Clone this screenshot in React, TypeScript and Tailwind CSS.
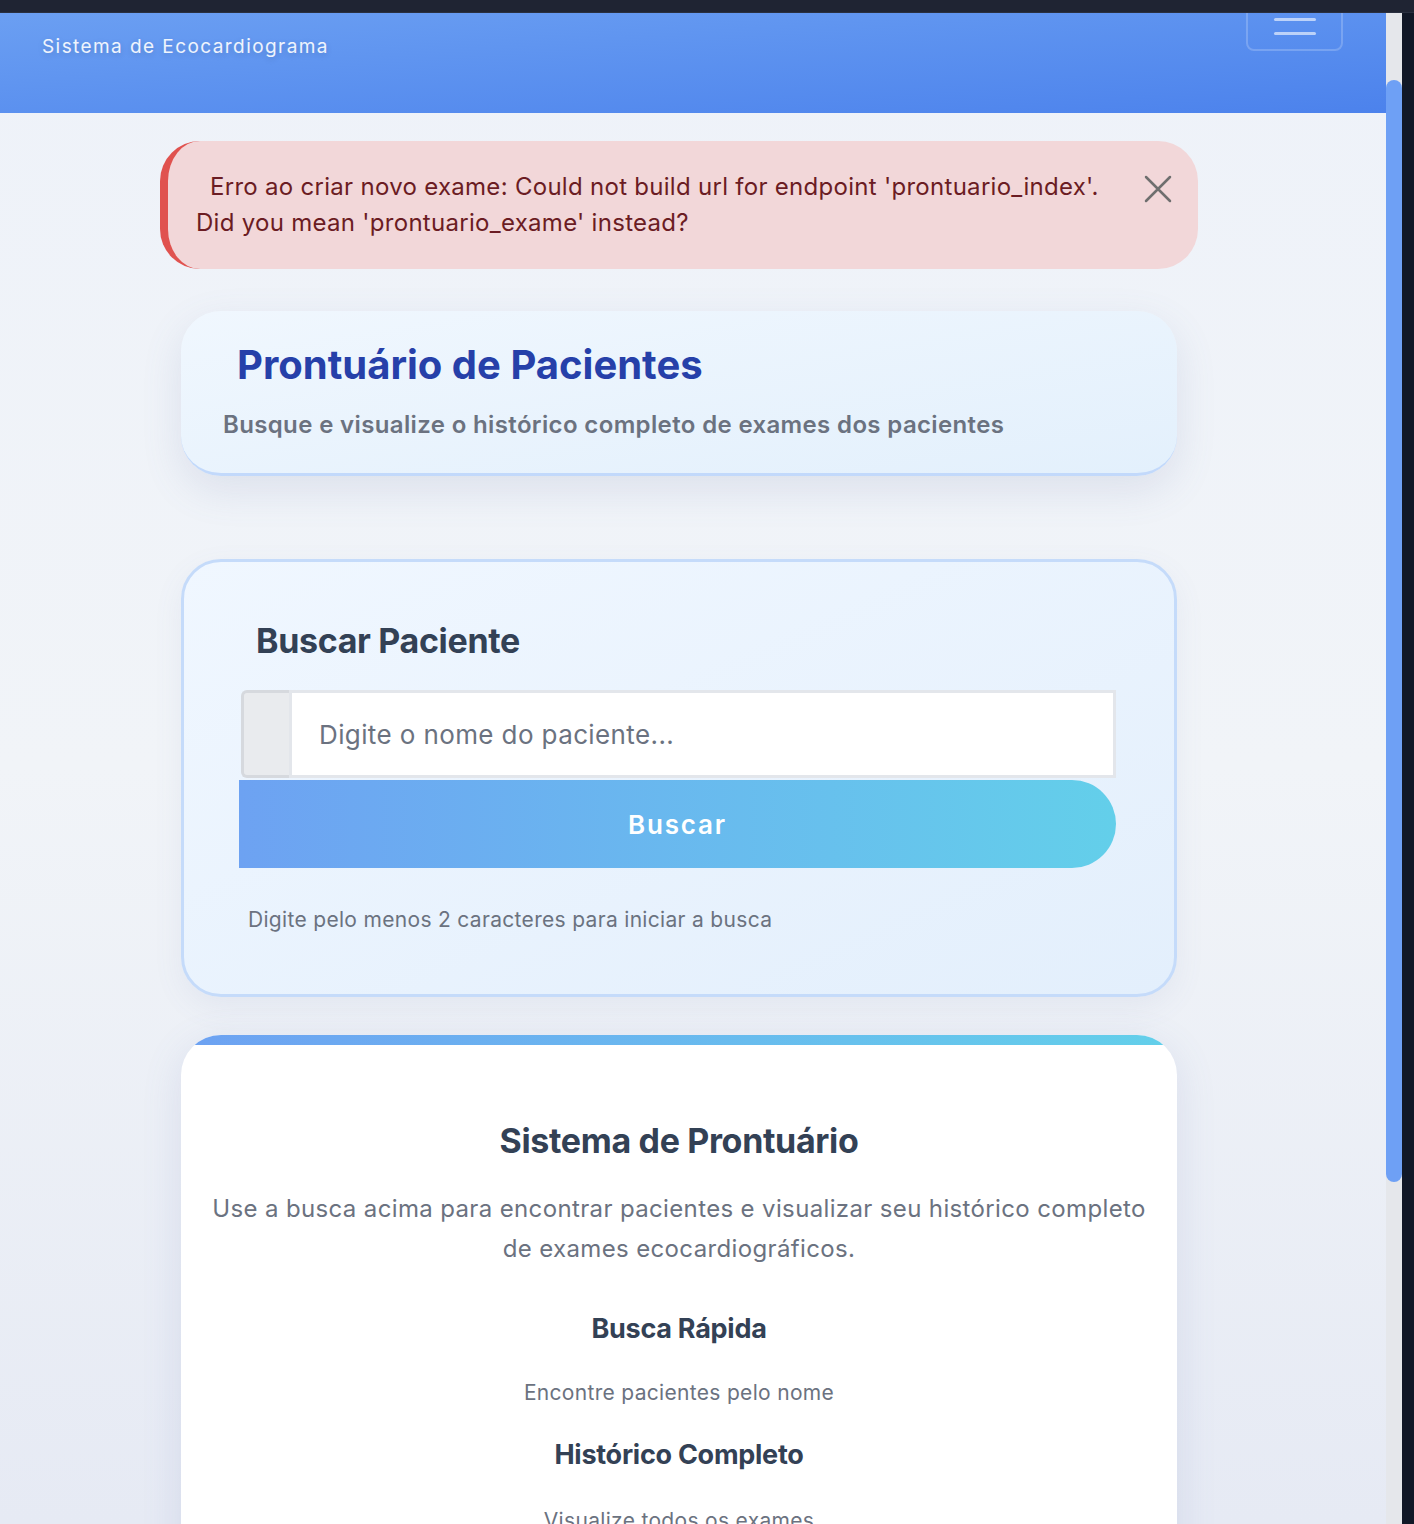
import React from 'react';

const font = { fontFamily: 'Inter, "Noto Sans", sans-serif' };

function Navbar() {
  return (
    <div className="relative h-[100px] bg-gradient-to-br from-[#6b9ff2] to-[#4c82ec] flex items-start justify-between pl-[42px] pr-[43px]">
      <span className="mt-[20px] text-[19px] tracking-[0.075em] text-white/90 [text-shadow:0_2px_6px_rgba(0,0,0,0.15)]">
        Sistema de Ecocardiograma
      </span>
      <button className="-mt-[26px] w-[97px] h-[64px] rounded-lg border-2 border-white/20 flex flex-col items-center justify-center gap-[11px]">
        <span className="block w-[42px] h-[3px] rounded bg-white/60" />
        <span className="block w-[42px] h-[3px] rounded bg-white/60" />
        <span className="block w-[42px] h-[3px] rounded bg-white/60" />
      </button>
    </div>
  );
}

function ErrorAlert() {
  return (
    <div className="relative rounded-[40px] border-l-[8px] border-[#e0524f] bg-[#f2d7d9] pl-[28px] pr-[86px] pt-[28px] pb-[28px] text-[24px] leading-[36px] tracking-[0.012em] text-[#6b1c23]">
      <span className="inline-block w-[14px]" />
      Erro ao criar novo exame: Could not build url for endpoint 'prontuario_index'. Did you mean 'prontuario_exame' instead?
      <button className="absolute right-[26px] top-[34px] text-[#6f6f6f]">
        <svg width="28" height="28" viewBox="0 0 28 28" fill="none" stroke="currentColor" strokeWidth="2.5" strokeLinecap="round">
          <path d="M2 2 L26 26 M26 2 L2 26" />
        </svg>
      </button>
    </div>
  );
}

function HeaderCard() {
  return (
    <div className="mx-[21px] mt-[42px] rounded-[40px] border-b-[3px] border-[#c2d9fb] bg-gradient-to-br from-[#f0f7fe] to-[#e3f0fc] pl-[42px] pt-[28px] pb-[32px] shadow-[0_14px_40px_rgba(100,116,160,0.14)]">
      <h1 className="pl-[14px] text-[40px] leading-[52px] font-bold text-[#2640a9]">Prontuário de Pacientes</h1>
      <p className="mt-[18px] text-[24px] leading-[32px] font-semibold tracking-[0.015em] text-[#6b7280]">
        Busque e visualize o histórico completo de exames dos pacientes
      </p>
    </div>
  );
}

function SearchCard() {
  return (
    <div className="mx-[21px] mt-[83px] rounded-[40px] border-[3px] border-[#c5dbfa] bg-gradient-to-br from-[#f0f7ff] to-[#e3effc] pl-[55px] pr-[58px] pt-[57px] pb-[60px] shadow-[0_10px_30px_rgba(100,116,160,0.08)]">
      <h2 className="pl-[17px] text-[34px] leading-[44px] font-bold tracking-[-0.01em] text-[#334155]">Buscar Paciente</h2>
      <div className="mt-[27px] flex h-[88px] pl-[2px]">
        <div className="w-[48px] rounded-l-[6px] border-[3px] border-r-0 border-[#d6d9de] bg-[#e9ebee]" />
        <input
          className="flex-1 border-[3px] border-[#e3e6eb] bg-white pl-[27px] text-[26px] tracking-[0.015em] text-[#374151] outline-none placeholder:text-[#6b7280]"
          placeholder="Digite o nome do paciente..."
        />
      </div>
      <button className="mt-[2px] w-full h-[88px] rounded-r-full bg-gradient-to-r from-[#6da2f2] to-[#63cfea] text-[26px] font-semibold tracking-[0.07em] text-white">
        Buscar
      </button>
      <p className="mt-[38px] pl-[9px] text-[21px] leading-[28px] tracking-[0.015em] text-[#6b7280]">Digite pelo menos 2 caracteres para iniciar a busca</p>
    </div>
  );
}

function InfoCard() {
  return (
    <div className="mx-[21px] mt-[38px] overflow-hidden rounded-t-[40px] bg-white shadow-[0_10px_40px_rgba(100,116,180,0.14)] text-center">
      <div className="mx-[10px] h-[10px] bg-gradient-to-r from-[#6da2f2] to-[#63cfea]" />
      <div className="px-[24px] pt-[74px] pb-[40px]">
        <h2 className="text-[34px] leading-[44px] font-bold tracking-[-0.01em] text-[#334155]">Sistema de Prontuário</h2>
        <p className="mt-[26px] text-[24px] leading-[40px] tracking-[0.015em] text-[#6b7280]">
          Use a busca acima para encontrar pacientes e visualizar seu histórico completo de exames ecocardiográficos.
        </p>
        <h3 className="mt-[42px] text-[27px] leading-[36px] font-bold tracking-[-0.01em] text-[#334155]">Busca Rápida</h3>
        <p className="mt-[32px] text-[21px] leading-[28px] tracking-[0.015em] text-[#6b7280]">Encontre pacientes pelo nome</p>
        <h3 className="mt-[30px] text-[27px] leading-[36px] font-bold tracking-[-0.01em] text-[#334155]">Histórico Completo</h3>
        <p className="mt-[34px] text-[21px] leading-[28px] tracking-[0.015em] text-[#6b7280]">Visualize todos os exames</p>
      </div>
    </div>
  );
}

export default function App() {
  return (
    <div className="h-[1524px] overflow-hidden bg-[#111827] flex flex-col" style={font}>
      <div className="relative z-10 h-[13px] shrink-0 bg-[#1f2433] border-b border-[#2a3040]" />
      <div className="flex flex-1 min-h-0">
        <div className="w-[1386px] bg-gradient-to-b from-[#eef2f9] via-[#f1f4f8] to-[#e6eaf4] overflow-hidden">
          <Navbar />
          <div className="pl-[160px] w-[1198px] pt-[28px]">
            <ErrorAlert />
            <HeaderCard />
            <SearchCard />
            <InfoCard />
          </div>
        </div>
        <div className="w-[16px] bg-[#e5e7eb] pt-[67px]">
          <div className="h-[1102px] rounded-full bg-[#6ea0f5]" />
        </div>
        <div className="w-[12px] bg-[#111827]" />
      </div>
    </div>
  );
}
